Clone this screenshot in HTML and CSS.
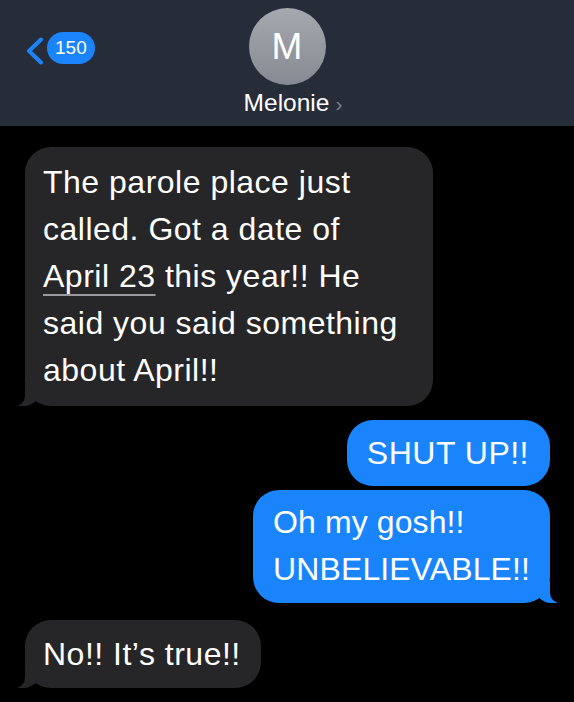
FILE: index.html
```html
<!DOCTYPE html>
<html lang="en">
<head>
    <meta charset="UTF-8" />
    <meta name="viewport" content="width=device-width, initial-scale=1.0" />
    <title>Melonie</title>
    <link rel="stylesheet" href="styles.css">
</head>
<body>
    <div class="header">
        <div class="back">
            <svg class="chevron" width="20" height="28" viewBox="0 0 20 28">
                <path d="M17 2.5 L5 14 L17 25.5" fill="none" stroke="#1a84fc" stroke-width="4" stroke-linecap="round" stroke-linejoin="round" />
            </svg>
            <span class="badge">150</span>
        </div>
        <div class="contact">
            <div class="avatar">M</div>
            <div class="name">Melonie<span class="more">&rsaquo;</span></div>
        </div>
        <div></div>
    </div>

    <div class="thread">
        <div class="bubble received">
            The parole place just<br>called. Got a date of<br><span class="date">April 23</span> this year!! He<br>said you said something<br>about April!!
        </div>
        <div class="bubble sent">SHUT UP!!</div>
        <div class="bubble sent last">Oh my gosh!!<br>UNBELIEVABLE!!</div>
        <div class="bubble received short">No!! It&rsquo;s true!!</div>
    </div>
</body>
</html>
```

FILE: styles.css
```css
body {
    font-family: "Liberation Sans", Arial, sans-serif;
    background-color: #000;
    color: #fff;
    margin: 0;
    padding: 0;
    width: 574px;
    height: 702px;
    overflow: hidden;
}

.header {
    background-color: #272d38;
    height: 126px;
    box-sizing: border-box;
    padding-top: 8px;
    display: grid;
    grid-template-columns: 1fr auto 1fr;
}

.back {
    display: flex;
    align-items: center;
    align-self: start;
    margin-top: 23px;
    margin-left: 24px;
}

.chevron {
    display: block;
    margin-top: 6px;
}

.badge {
    background-color: #1a84fc;
    color: #fff;
    font-size: 19px;
    line-height: 32px;
    height: 32px;
    padding: 0 8px;
    border-radius: 16px;
    margin-left: 3px;
}

.contact {
    display: flex;
    flex-direction: column;
    align-items: center;
}

.avatar {
    width: 77px;
    height: 77px;
    border-radius: 50%;
    background: linear-gradient(#a6a8af, #878a92);
    display: flex;
    justify-content: center;
    align-items: center;
    font-size: 37px;
    color: #fff;
}

.name {
    font-size: 24.5px;
    margin-top: 4px;
    margin-left: 12px;
}

.more {
    color: #7d828c;
    font-size: 21px;
    margin-left: 6px;
}

.thread {
    display: flex;
    flex-direction: column;
    padding: 21px 24px 0 25px;
}

.bubble {
    position: relative;
    font-size: 32px;
    letter-spacing: 0.5px;
    line-height: 47px;
    padding: 12px 18px;
    border-radius: 26px;
}

.received {
    background-color: #262629;
    align-self: flex-start;
    width: 372px;
}

.received.short {
    width: auto;
    padding: 11px 20px 10px 18px;
    margin-top: 17px;
}

.sent {
    background-color: #1a84fc;
    align-self: flex-end;
    padding: 10px 21px 9px 20px;
    margin-top: 14px;
}

.sent.last {
    margin-top: 4px;
    padding: 9px 20px 10px 20px;
    letter-spacing: 0.1px;
}

.date {
    text-decoration: underline;
    text-decoration-color: #9a9aa0;
    text-decoration-thickness: 2px;
    text-underline-offset: 7px;
}

/* bubble tails */
.received::before,
.received::after,
.sent.last::before,
.sent.last::after {
    content: "";
    position: absolute;
    bottom: 0;
    height: 22px;
}

.received::before {
    left: -7px;
    width: 22px;
    background-color: #262629;
    border-bottom-right-radius: 16px;
}

.received::after {
    left: -10px;
    width: 10px;
    background-color: #000;
    border-bottom-right-radius: 10px;
}

.sent.last::before {
    right: -7px;
    width: 22px;
    background-color: #1a84fc;
    border-bottom-left-radius: 16px;
}

.sent.last::after {
    right: -10px;
    width: 10px;
    background-color: #000;
    border-bottom-left-radius: 10px;
}
```
